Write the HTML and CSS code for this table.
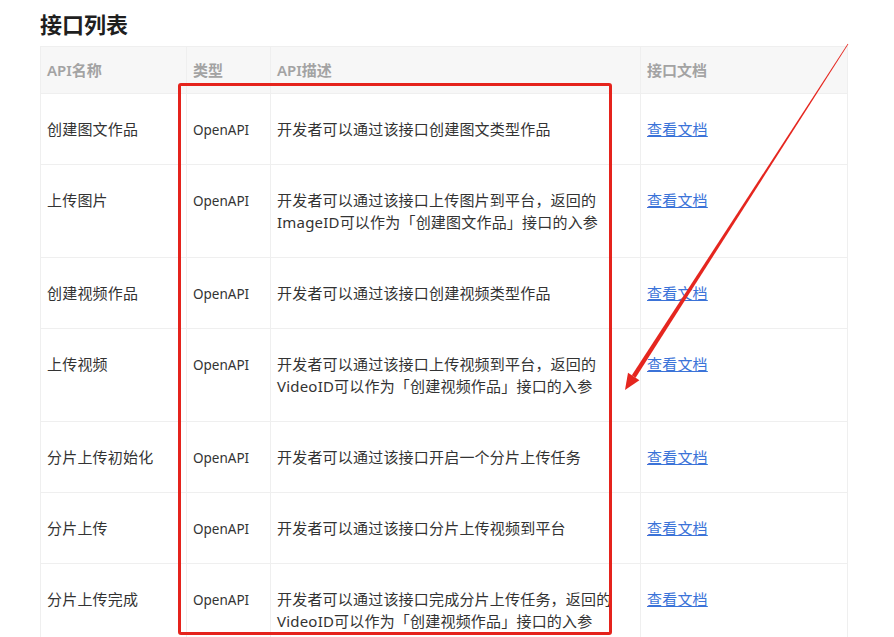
FILE: index.html
```html
<!DOCTYPE html>
<html lang="zh-CN">
<head>
<meta charset="utf-8">
<title>接口列表</title>
<link rel="stylesheet" href="styles.css">
</head>
<body>
<div class="page">
  <h2 class="title">接口列表</h2>
  <table class="api-table">
    <colgroup>
      <col class="c-name"><col class="c-type"><col class="c-desc"><col class="c-doc">
    </colgroup>
    <thead>
      <tr><th>API名称</th><th>类型</th><th>API描述</th><th>接口文档</th></tr>
    </thead>
    <tbody>
      <tr><td>创建图文作品</td><td class="type">OpenAPI</td><td>开发者可以通过该接口创建图文类型作品</td><td><a href="#">查看文档</a></td></tr>
      <tr><td>上传图片</td><td class="type">OpenAPI</td><td>开发者可以通过该接口上传图片到平台，返回的<br>ImageID可以作为「创建图文作品」接口的入参</td><td><a href="#">查看文档</a></td></tr>
      <tr><td>创建视频作品</td><td class="type">OpenAPI</td><td>开发者可以通过该接口创建视频类型作品</td><td><a href="#">查看文档</a></td></tr>
      <tr><td>上传视频</td><td class="type">OpenAPI</td><td>开发者可以通过该接口上传视频到平台，返回的<br>VideoID可以作为「创建视频作品」接口的入参</td><td><a href="#">查看文档</a></td></tr>
      <tr><td>分片上传初始化</td><td class="type">OpenAPI</td><td>开发者可以通过该接口开启一个分片上传任务</td><td><a href="#">查看文档</a></td></tr>
      <tr><td>分片上传</td><td class="type">OpenAPI</td><td>开发者可以通过该接口分片上传视频到平台</td><td><a href="#">查看文档</a></td></tr>
      <tr><td>分片上传完成</td><td class="type">OpenAPI</td><td>开发者可以通过该接口完成分片上传任务，返回的<br>VideoID可以作为「创建视频作品」接口的入参</td><td><a href="#">查看文档</a></td></tr>
    </tbody>
  </table>
  <div class="highlight-box"></div>
  <svg class="arrow" width="894" height="637" viewBox="0 0 894 637">
    <polygon points="848.3,44.2 847.7,43.8 631.8,375.3 635.6,377.8" fill="#e5261f"/>
    <polygon points="625,390 639.4,380.3 628.0,372.7" fill="#e5261f"/>
  </svg>
</div>
</body>
</html>
```

FILE: styles.css
```css
html, body {
  margin: 0;
  padding: 0;
  background: #ffffff;
}

body {
  font-family: "Noto Sans", "Noto Sans CJK SC", sans-serif;
  color: #333333;
  overflow: hidden;
}

.page {
  position: relative;
  width: 894px;
  height: 637px;
  overflow: hidden;
  padding: 0 0 0 40px;
  box-sizing: border-box;
}

.title {
  margin: 9px 0 7px;
  font-size: 22px;
  line-height: 30px;
  font-weight: 700;
  color: #1f1f1f;
}

.api-table {
  border-collapse: collapse;
  table-layout: fixed;
  width: 807px;
  font-size: 15px;
  line-height: 22px;
}

.c-name { width: 146px; }
.c-type { width: 84px; }
.c-desc { width: 370px; }
.c-doc { width: 207px; }

.api-table th,
.api-table td {
  border: 1px solid #efefef;
  text-align: left;
  vertical-align: top;
  white-space: nowrap;
  overflow: visible;
}

.api-table th {
  background: #f7f7f7;
  color: #a3a3a3;
  font-weight: 600;
  padding: 12px 6px 12px 6px;
}

.api-table td {
  padding: 24px 6px 24px 6px;
  letter-spacing: 0.2px;
}

.api-table td.type {
  font-size: 13.5px;
  color: #333333;
  letter-spacing: 0;
  padding-top: 25px;
  padding-bottom: 23px;
}

.api-table a {
  color: #3b73d8;
  text-decoration: underline;
}

.highlight-box {
  position: absolute;
  left: 178px;
  top: 83px;
  width: 434px;
  height: 552px;
  box-sizing: border-box;
  border: 3px solid #e5231c;
  border-radius: 3px;
  pointer-events: none;
}

.arrow {
  position: absolute;
  left: 0;
  top: 0;
  pointer-events: none;
}
```
